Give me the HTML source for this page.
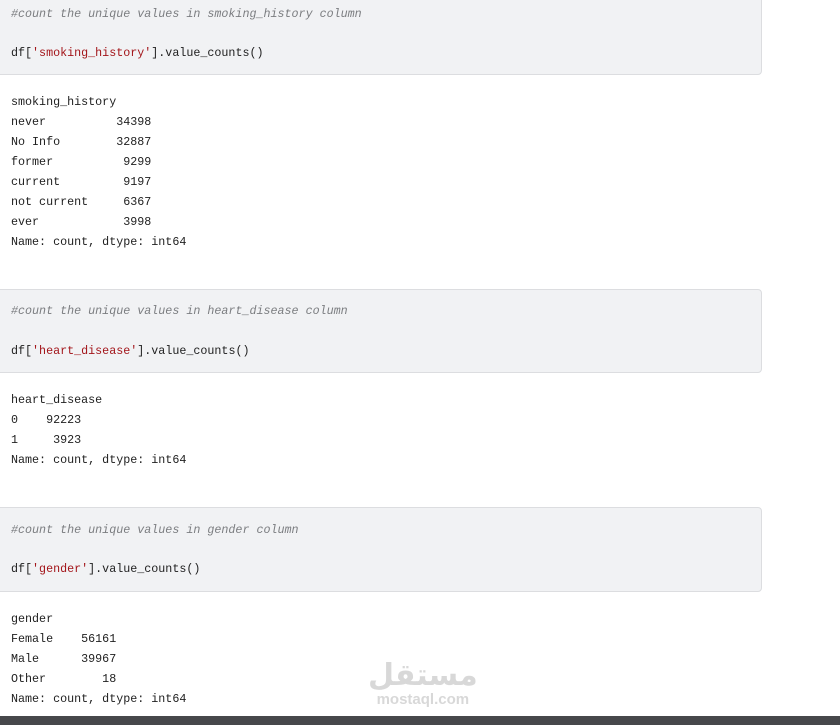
<!DOCTYPE html>
<html><head><meta charset="utf-8"><style>
body{margin:0;width:840px;height:725px;background:#fff;position:relative;overflow:hidden;font-family:"Liberation Mono",monospace;font-size:11.7px;color:#212121}
.cell{position:absolute;left:-6px;width:766px;background:#f1f2f4;border:1px solid #dcdde0;border-radius:4px}
.t{position:absolute;left:11px;white-space:pre;line-height:20px}
.c{color:#7b7d80;font-style:italic}
.s{color:#a3151a}
.bar{position:absolute;left:0;top:716px;width:840px;height:9px;background:#47484b}
.wm{position:absolute;left:368px;top:660px;color:#d8d8d8;font-family:"Liberation Sans",sans-serif;font-weight:bold;text-align:center}
</style></head><body>
<div class="cell" style="top:-6px;height:79px"></div>
<div class="t c" style="top:4px">#count the unique values in smoking_history column</div>
<div class="t" style="top:43px">df[<span class="s">'smoking_history'</span>].value_counts()</div>
<div class="t" style="top:92px">smoking_history
never          34398
No Info        32887
former          9299
current         9197
not current     6367
ever            3998
Name: count, dtype: int64</div>
<div class="cell" style="top:289px;height:82px"></div>
<div class="t c" style="top:301px">#count the unique values in heart_disease column</div>
<div class="t" style="top:341px">df[<span class="s">'heart_disease'</span>].value_counts()</div>
<div class="t" style="top:390px">heart_disease
0    92223
1     3923
Name: count, dtype: int64</div>
<div class="cell" style="top:507px;height:83px"></div>
<div class="t c" style="top:520px">#count the unique values in gender column</div>
<div class="t" style="top:559px">df[<span class="s">'gender'</span>].value_counts()</div>
<div class="t" style="top:609px">gender
Female    56161
Male      39967
Other        18
Name: count, dtype: int64</div>
<div class="wm"><div style="font-size:30px;line-height:32px;font-family:'DejaVu Sans',sans-serif">مستقل</div><div style="font-size:15px;line-height:16px">mostaql.com</div></div>
<div class="bar"></div>
</body></html>
